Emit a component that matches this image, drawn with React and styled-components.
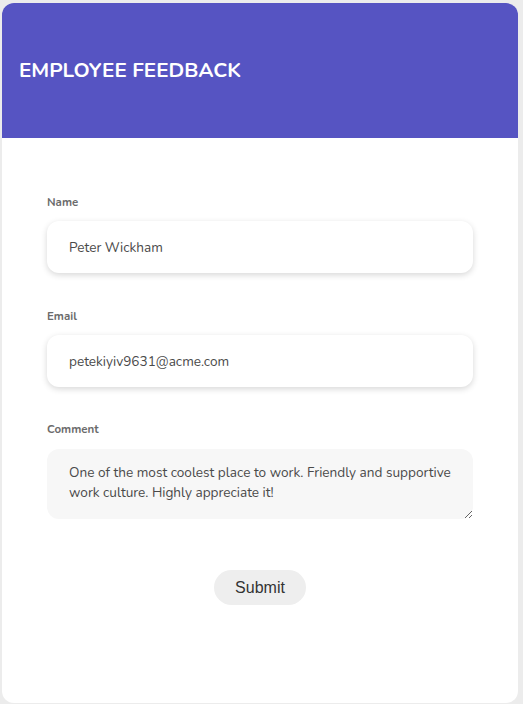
import styled, { createGlobalStyle } from "styled-components";

const GlobalStyle = createGlobalStyle`
  html, body {
    margin: 0;
    background: #ececec;
  }
  body {
    padding: 3px 5px 1px 2px;
    font-family: "Nunito", "Lato", "Noto Sans", sans-serif;
  }
`;

const Card = styled.div`
  background: #fff;
  border-radius: 12px;
  height: 700px;
  overflow: hidden;
  display: flex;
  flex-direction: column;
`;

const Header = styled.div`
  background-color: #5654c2;
  height: 135px;
  display: flex;
  align-items: center;
  padding-left: 17px;
  padding-bottom: 2px;
  box-sizing: border-box;
`;

const Title = styled.h1`
  margin: 0;
  color: #fff;
  font-size: 20.6px;
  font-weight: 700;
`;

const Form = styled.form`
  display: flex;
  flex-direction: column;
  padding: 57px 45px 0;
`;

const Field = styled.div`
  display: flex;
  flex-direction: column;
  margin-bottom: ${(p) => p.gap || 36}px;
`;

const Label = styled.label`
  font-size: 11.5px;
  line-height: 15px;
  font-weight: 700;
  color: #6b6b6b;
  margin-bottom: 11px;
`;

const Input = styled.input`
  box-sizing: border-box;
  height: 52px;
  border: none;
  border-radius: 12px;
  background: #fff;
  box-shadow: 0 2px 6px rgba(0, 0, 0, 0.16);
  padding: 0 22px;
  font-family: inherit;
  font-size: 13.6px;
  color: #4a4a4a;
  outline: none;
`;

const TextArea = styled.textarea`
  box-sizing: border-box;
  height: 70px;
  margin-top: 1px;
  border: none;
  border-radius: 12px;
  background: #f7f7f7;
  padding: 14px 16px 0 22px;
  font-family: inherit;
  font-size: 13.6px;
  line-height: 20px;
  color: #4a4a4a;
  outline: none;
  resize: vertical;
`;

const Actions = styled.div`
  display: flex;
  justify-content: center;
  padding-top: 15px;
`;

const Button = styled.button`
  width: 92px;
  height: 35px;
  border: none;
  border-radius: 18px;
  background: #eeeeee;
  color: #333;
  font-family: "Liberation Sans", Arial, sans-serif;
  font-size: 16px;
  cursor: pointer;
`;

const App = () => {
  return (
    <>
      <GlobalStyle />
      <Card>
        <Header>
          <Title>EMPLOYEE FEEDBACK</Title>
        </Header>
        <Form onSubmit={(e) => e.preventDefault()}>
          <Field>
            <Label>Name</Label>
            <Input type="text" defaultValue="Peter Wickham" />
          </Field>
          <Field gap={35}>
            <Label>Email</Label>
            <Input type="email" defaultValue="petekiyiv9631@acme.com" />
          </Field>
          <Field>
            <Label>Comment</Label>
            <TextArea defaultValue="One of the most coolest place to work. Friendly and supportive work culture. Highly appreciate it!" />
          </Field>
          <Actions>
            <Button type="submit">Submit</Button>
          </Actions>
        </Form>
      </Card>
    </>
  );
};

export default App;
